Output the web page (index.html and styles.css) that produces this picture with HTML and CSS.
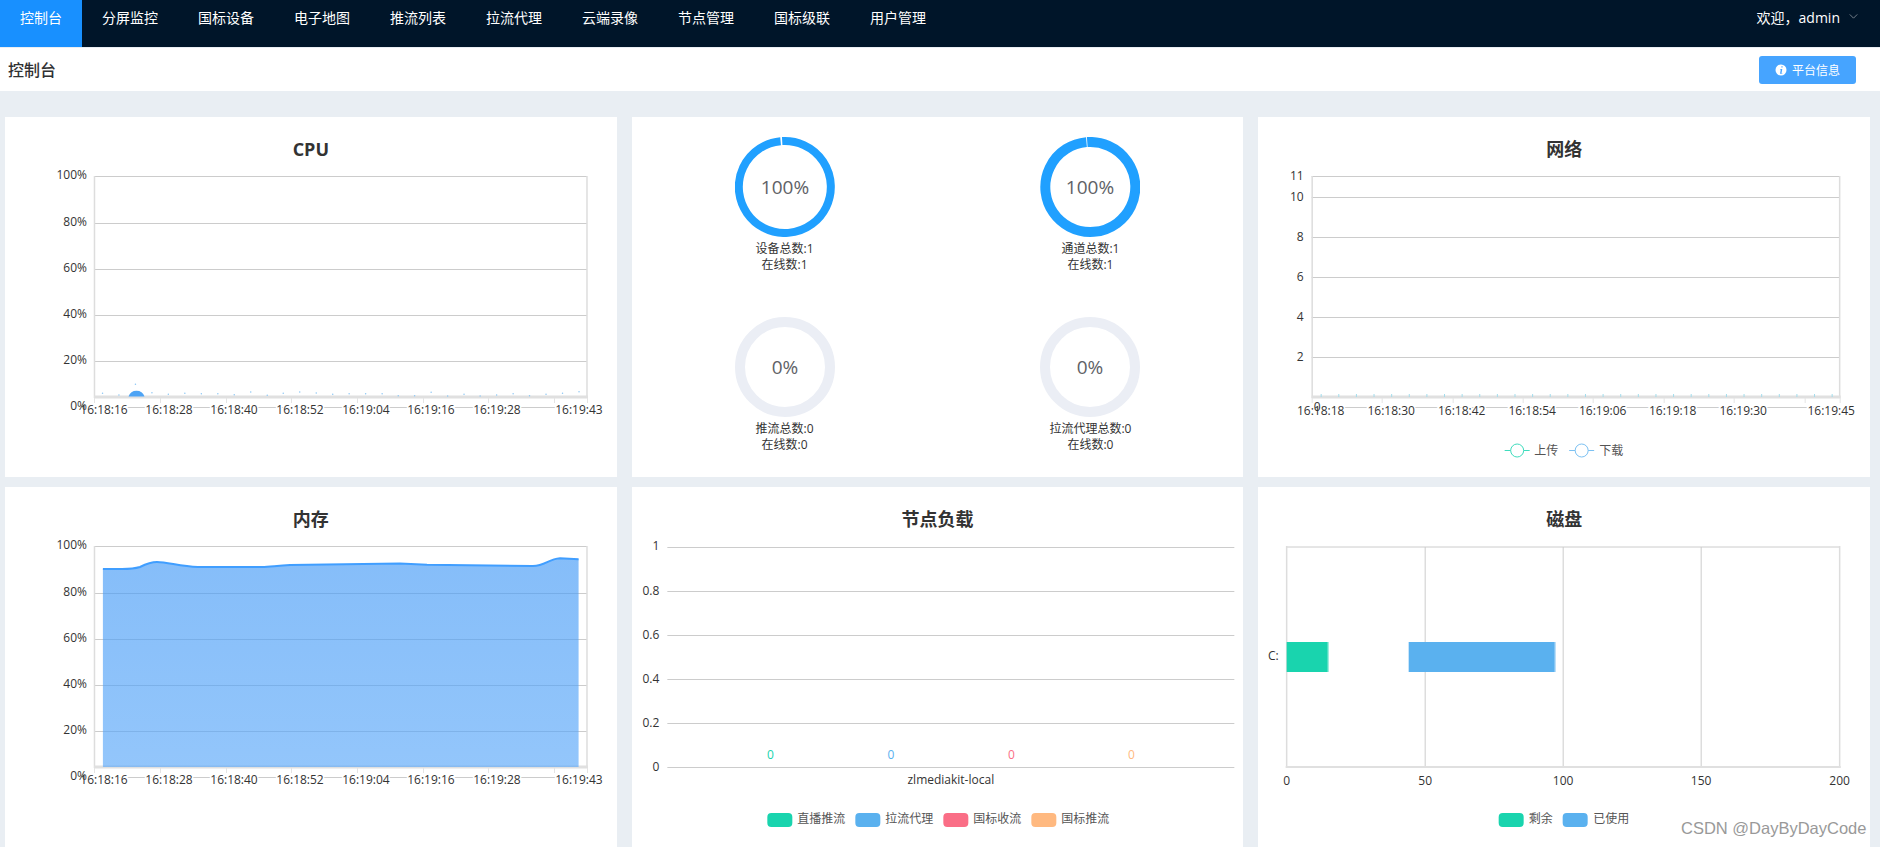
FILE: index.html
```html
<!DOCTYPE html>
<html lang="zh-CN">
<head>
<meta charset="utf-8">
<title>控制台</title>
<link rel="stylesheet" href="styles.css">
</head>
<body>
<header class="topbar">
  <nav class="nav">
    <a class="nav-item active">控制台</a>
    <a class="nav-item">分屏监控</a>
    <a class="nav-item">国标设备</a>
    <a class="nav-item">电子地图</a>
    <a class="nav-item">推流列表</a>
    <a class="nav-item">拉流代理</a>
    <a class="nav-item">云端录像</a>
    <a class="nav-item">节点管理</a>
    <a class="nav-item">国标级联</a>
    <a class="nav-item">用户管理</a>
  </nav>
  <div class="user">
    <span>欢迎，admin</span>
    <svg class="chevron" viewBox="0 0 10 6"><path d="M.5 .5 5 5 9.500 .5"/></svg>
  </div>
</header>
<section class="page-head">
  <h1 class="page-title">控制台</h1>
  <button class="info-btn">
    <svg class="info-icon" viewBox="0 0 12 12"><circle cx="6" cy="6" r="5.500"/><path d="M6.400 2.300h1.200v1.300H6.400zM5 5h2.300L6.500 9.300h.9v.5H5l.8-4.300H5z"/></svg>
    <span>平台信息</span>
  </button>
</section>
<main class="board">
  <article class="card">
    <h2 class="card-title">CPU</h2>
    <svg class="chart" viewBox="5 161 611.67 316">
      <g class="grid">
        <path d="M94 223.500H587M94 269.500H587M94 315.500H587M94 361.500H587M94 407.500H587"/>
      </g>
      <path class="box-top" d="M94 176.500H587"/>
      <path class="box-side" d="M94.500 176V398M587 176V398"/>
      <path class="box-bottom" d="M94 397H588"/>
      <path class="ticks" d="M94.500 398v5M160.500 398v5M226.500 398v5M291.500 398v5M357.500 398v5M423.500 398v5M488.500 398v5M554.500 398v5M587.500 398v5"/>
      <path class="dots" d="M102.500 393.300h.1M118.900 395h.1M135.400 384.300h.1M151.900 392.700h.1M168.300 394.300h.1M184.800 393.300h.1M201.300 393.700h.1M217.800 393.700h.1M234.200 394.700h.1M250.700 392h.1M267.200 395.300h.1M283.200 393.300h.1M299.700 392h.1M316.200 393h.1M332.700 394.300h.1M349.100 393.700h.1M365.600 393.700h.1M382.100 393.700h.1M398.200 395.700h.1M414.600 395.700h.1M431.100 392.300h.1M447.600 396h.1M464 394.300h.1M480.100 396h.1M496.600 395h.1M513.100 393.700h.1M529.500 395.700h.1M546 394.300h.1M562.500 393.300h.1M579 391.700h.1"/>
      <path class="bump" d="M128.500 396.500A8.500 8.500 0 0 1 144.500 396.500Z"/>
      <g class="label mid halo">
        <text x="104" y="410">16:18:16</text><text x="169" y="410">16:18:28</text><text x="234" y="410">16:18:40</text><text x="300" y="410">16:18:52</text><text x="366" y="410">16:19:04</text><text x="431" y="410">16:19:16</text><text x="497" y="410">16:19:28</text><text x="579" y="410">16:19:43</text>
      </g>
      <g class="label end">
        <text x="87" y="175">100%</text><text x="87" y="222">80%</text><text x="87" y="268">60%</text><text x="87" y="314">40%</text><text x="87" y="360">20%</text><text x="87" y="406">0%</text>
      </g>
    </svg>
  </article>

  <article class="card gauges">
    <div class="gauge">
      <svg class="ring" viewBox="0 0 100 100"><path class="ring-on thin" d="M47.190 4.090A46 46 0 1 1 45.590 4.210"/><text class="ring-text" x="50" y="50">100%</text></svg>
      <p class="gauge-label">设备总数:1<br>在线数:1</p>
    </div>
    <div class="gauge">
      <svg class="ring" viewBox="0 0 100 100"><path class="ring-on" d="M47.250 5.080A45 45 0 1 1 46.470 5.140"/><text class="ring-text" x="50" y="50">100%</text></svg>
      <p class="gauge-label">通道总数:1<br>在线数:1</p>
    </div>
    <div class="gauge">
      <svg class="ring" viewBox="0 0 100 100"><circle class="ring-off" cx="50" cy="50" r="45"/><text class="ring-text" x="50" y="50">0%</text></svg>
      <p class="gauge-label">推流总数:0<br>在线数:0</p>
    </div>
    <div class="gauge">
      <svg class="ring" viewBox="0 0 100 100"><circle class="ring-off" cx="50" cy="50" r="45"/><text class="ring-text" x="50" y="50">0%</text></svg>
      <p class="gauge-label">拉流代理总数:0<br>在线数:0</p>
    </div>
  </article>

  <article class="card">
    <h2 class="card-title">网络</h2>
    <svg class="chart" viewBox="1258.330 161 611.67 316">
      <g class="grid">
        <path d="M1312 197.500H1840M1312 237.500H1840M1312 277.500H1840M1312 317.500H1840M1312 357.500H1840M1312 407.500H1840"/>
      </g>
      <path class="box-top" d="M1312 176.500H1840"/>
      <path class="box-side" d="M1312.500 176V398M1840 176V398"/>
      <path class="box-bottom" d="M1312 397H1841"/>
      <path class="ticks" d="M1312.500 398v5M1382.500 398v5M1453.500 398v5M1523.500 398v5M1593.500 398v5M1664.500 398v5M1734.500 398v5M1805.500 398v5M1840.500 398v5"/>
      <path class="net-dots" d="M1321 395.500H1833"/>
      <g class="label mid halo">
        <text x="1321" y="410">16:18:18</text><text x="1391.500" y="410">16:18:30</text><text x="1462" y="410">16:18:42</text><text x="1532.500" y="410">16:18:54</text><text x="1603" y="410">16:19:06</text><text x="1673" y="410">16:19:18</text><text x="1743.500" y="410">16:19:30</text><text x="1831.500" y="410">16:19:45</text>
      </g>
      <g class="label end">
        <text x="1304" y="175">11</text><text x="1304" y="196">10</text><text x="1304" y="236">8</text><text x="1304" y="276">6</text><text x="1304" y="316">4</text><text x="1304" y="356">2</text><text x="1321" y="406">0</text>
      </g>
      <path class="leg-line teal" d="M1505 450.500H1530"/><circle class="leg-dot teal" cx="1517.500" cy="450.500" r="6.500"/>
      <text class="legend" x="1534.500" y="450">上传</text>
      <path class="leg-line sky" d="M1569.500 450.500H1594.500"/><circle class="leg-dot sky" cx="1582" cy="450.500" r="6.500"/>
      <text class="legend" x="1599.500" y="450">下载</text>
    </svg>
  </article>

  <article class="card">
    <h2 class="card-title">内存</h2>
    <svg class="chart" viewBox="5 531 611.67 316">
      <defs>
        <linearGradient id="memFill" x1="0" y1="0" x2="0" y2="1">
          <stop offset="0" stop-color="#449af6"/>
          <stop offset="1" stop-color="#59a7f9"/>
        </linearGradient>
      </defs>
      <g class="grid">
        <path d="M94 593.500H587M94 639.500H587M94 685.500H587M94 731.500H587M94 777.500H587"/>
      </g>
      <path class="box-top" d="M94 546.500H587"/>
      <path class="box-side" d="M94.500 546V768M587 546V768"/>
      <path class="box-bottom" d="M94 767H588"/>
      <path class="ticks" d="M94.500 768v5M160.500 768v5M226.500 768v5M291.500 768v5M357.500 768v5M423.500 768v5M488.500 768v5M554.500 768v5M587.500 768v5"/>
      <path class="mem-area" d="M102.900 569H122C130 569 135 568.500 140 567C146 564 150 562 157 562C168 562 180 566.500 198 567H262C270 567 277 565.500 290 565L400 563.500L427 564.800L532 566C545 566.500 548 559 560 558.300L578.600 559.300V767H102.900Z"/>
      <path class="mem-line" d="M102.900 569H122C130 569 135 568.500 140 567C146 564 150 562 157 562C168 562 180 566.500 198 567H262C270 567 277 565.500 290 565L400 563.500L427 564.800L532 566C545 566.500 548 559 560 558.300L578.600 559.300"/>
      <g class="label mid halo">
        <text x="104" y="780">16:18:16</text><text x="169" y="780">16:18:28</text><text x="234" y="780">16:18:40</text><text x="300" y="780">16:18:52</text><text x="366" y="780">16:19:04</text><text x="431" y="780">16:19:16</text><text x="497" y="780">16:19:28</text><text x="579" y="780">16:19:43</text>
      </g>
      <g class="label end">
        <text x="87" y="545">100%</text><text x="87" y="592">80%</text><text x="87" y="638">60%</text><text x="87" y="684">40%</text><text x="87" y="730">20%</text><text x="87" y="776">0%</text>
      </g>
    </svg>
  </article>

  <article class="card">
    <h2 class="card-title">节点负载</h2>
    <svg class="chart" viewBox="631.670 531 611.67 316">
      <g class="grid">
        <path d="M667 547.500H1234M667 591.500H1234M667 635.500H1234M667 679.500H1234M667 723.500H1234M667 767.500H1234"/>
      </g>
      <g class="label end">
        <text x="659" y="545.500">1</text><text x="659" y="590">0.8</text><text x="659" y="634">0.6</text><text x="659" y="678">0.4</text><text x="659" y="722">0.2</text><text x="659" y="766">0</text>
      </g>
      <text class="val c-green" x="770" y="754">0</text>
      <text class="val c-blue" x="890.500" y="754">0</text>
      <text class="val c-pink" x="1011" y="754">0</text>
      <text class="val c-orange" x="1131" y="754">0</text>
      <g class="label mid"><text x="950.500" y="779">zlmediakit-local</text></g>
      <rect class="swatch c-green" x="767" y="813" width="25" height="14" rx="4"/><text class="legend" x="797" y="818">直播推流</text>
      <rect class="swatch c-blue" x="855" y="813" width="25" height="14" rx="4"/><text class="legend" x="885" y="818">拉流代理</text>
      <rect class="swatch c-pink" x="943" y="813" width="25" height="14" rx="4"/><text class="legend" x="973" y="818">国标收流</text>
      <rect class="swatch c-orange" x="1031" y="813" width="25" height="14" rx="4"/><text class="legend" x="1061" y="818">国标推流</text>
    </svg>
  </article>

  <article class="card">
    <h2 class="card-title">磁盘</h2>
    <svg class="chart" viewBox="1258.330 531 611.67 316">
      <g class="grid"><path d="M1425.500 547V767M1563.500 547V767M1701.500 547V767"/></g>
      <path class="box-top" d="M1287 547H1840"/>
      <path class="box-side" d="M1287 546V768M1840 546V768"/>
      <path class="box-bottom thin" d="M1286 767H1841"/>
      <rect class="bar c-green" x="1287" y="642" width="41" height="30"/>
      <rect class="bar-edge c-green" x="1328" y="642" width="1" height="30"/>
      <rect class="bar c-blue" x="1409" y="642" width="146" height="30"/>
      <rect class="bar-edge c-blue" x="1555" y="642" width="1" height="30"/>
      <g class="label end"><text x="1279" y="655.500">C:</text></g>
      <g class="label mid">
        <text x="1287" y="780">0</text><text x="1425.500" y="780">50</text><text x="1563.500" y="780">100</text><text x="1701.500" y="780">150</text><text x="1840" y="780">200</text>
      </g>
      <rect class="swatch c-green" x="1499" y="813" width="25" height="14" rx="4"/><text class="legend" x="1529" y="818">剩余</text>
      <rect class="swatch c-blue" x="1563" y="813" width="25" height="14" rx="4"/><text class="legend" x="1593.500" y="818">已使用</text>
    </svg>
  </article>
</main>
<div class="watermark">CSDN @DayByDayCode</div>
</body>
</html>
```

FILE: styles.css
```css
* { box-sizing: border-box; }
html, body { margin: 0; padding: 0; }
body {
  position: relative;
  height: 847px;
  overflow: hidden;
  background: #e9eef3;
  font-family: "Open Sans", "Noto Sans CJK SC", sans-serif;
  color: #333;
}
.topbar {
  display: flex;
  justify-content: space-between;
  height: 47px;
  background: #001529;
  color: #fff;
  font-size: 14px;
  line-height: 36px;
}
.nav { display: flex; }
.nav-item { padding: 0 20px; }
.nav-item.active { background: #1890ff; }
.user {
  display: flex;
  align-items: flex-start;
  padding-right: 22px;
}
.chevron {
  width: 9px;
  height: 5px;
  margin: 14px 0 0 9px;
  fill: none;
  stroke: #8a939c;
  stroke-width: 1;
}
.page-head {
  display: flex;
  justify-content: space-between;
  align-items: center;
  height: 43px;
  margin-top: 1px;
  padding: 0 24px 0 8px;
  background: #fff;
}
.page-title {
  margin: 0 0 2px;
  font-size: 16px;
  font-weight: 500;
  color: #303133;
}
.info-btn {
  display: flex;
  align-items: center;
  gap: 5px;
  height: 28px;
  padding: 0 16px;
  border: 0;
  border-radius: 3px;
  background: #46a4ff;
  color: #fff;
  font: inherit;
  font-size: 12px;
}
.info-icon { width: 12px; height: 12px; fill: #fff; }
.info-icon path { fill: #46a4ff; }
.board {
  display: grid;
  grid-template-columns: repeat(3, 1fr);
  grid-auto-rows: 360px;
  gap: 10px 15px;
  padding: 26px 10px 0 5px;
}
.card { background: #fff; min-width: 0; }
.card-title {
  margin: 0;
  height: 44px;
  padding-top: 20px;
  font-size: 18px;
  font-weight: 700;
  line-height: 24px;
  text-align: center;
  color: #333;
}
.chart { display: block; width: 100%; height: 316px; }
.grid path { fill: none; stroke: #ccc; stroke-width: 1; }
.box-top { fill: none; stroke: #ccc; stroke-width: 1; }
.box-side { fill: none; stroke: #ddd; stroke-width: 1.500; }
.box-bottom { fill: none; stroke: #e0e0e0; stroke-width: 3; }
.box-bottom.thin { stroke-width: 2; }
.ticks { fill: none; stroke: #e4e4e4; stroke-width: 1; }
.dots {
  fill: none;
  stroke: #8fc8f5;
  stroke-width: 1.400;
  stroke-linecap: round;
}
.bump { fill: #4ea4f5; }
.net-dots {
  fill: none;
  stroke: #a3dcec;
  stroke-width: 3;
  stroke-dasharray: 1 16.620;
}
.label text, .legend, .val {
  font-size: 12px;
  dominant-baseline: central;
}
.label text { fill: #333; }
.label.end text { text-anchor: end; }
.label.mid text { text-anchor: middle; }
.halo text { paint-order: stroke; stroke: #fff; stroke-width: 3px; }
.legend { fill: #555; }
.val { text-anchor: middle; }
.c-green { fill: #19d4ae; }
.c-blue { fill: #5ab1ef; }
.c-pink { fill: #fa6e86; }
.c-orange { fill: #ffb980; }
.bar-edge { opacity: .6; }
.leg-line { fill: none; stroke-width: 1; }
.leg-dot { fill: #fff; stroke-width: 1; }
.teal { stroke: #3fdcbd; }
.sky { stroke: #7cc1f2; }
.mem-area { fill: url(#memFill); fill-opacity: .65; }
.mem-line { fill: none; stroke: #409eff; stroke-width: 2; }
.gauges {
  display: grid;
  grid-template-columns: repeat(2, 1fr);
  grid-auto-rows: 180px;
  padding-top: 20px;
}
.gauge { display: flex; flex-direction: column; align-items: center; }
.ring { display: block; width: 100px; height: 100px; flex: none; }
.ring-on { fill: none; stroke: #20a0ff; stroke-width: 10; }
.ring-on.thin { stroke-width: 8; }
.ring-off { fill: none; stroke: #ebeef5; stroke-width: 10; }
.ring-text {
  fill: #606266;
  font-size: 19px;
  text-anchor: middle;
  dominant-baseline: central;
}
.gauge-label {
  margin: 4px 0 0;
  font-size: 12px;
  line-height: 16px;
  text-align: center;
  color: #333;
}
.watermark {
  position: absolute;
  left: 1681px;
  top: 817px;
  font-family: "Liberation Sans", sans-serif;
  font-size: 16.500px;
  line-height: 22px;
  color: #999;
  white-space: nowrap;
}
```
